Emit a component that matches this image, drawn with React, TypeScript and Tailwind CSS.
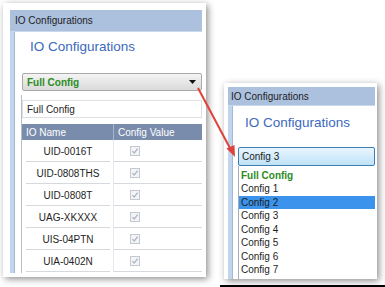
import React from "react";

const font = { fontFamily: '"Liberation Sans", Arial, sans-serif' };

function Check() {
  return (
    <div className="w-[10px] h-[10px] border border-[#c4c8cf] bg-[#f3f4f6] flex items-center justify-center">
      <svg width="8" height="8" viewBox="0 0 8 8">
        <path d="M1.5 4.2 L3.2 6 L6.6 1.6" fill="none" stroke="#a9b1bf" strokeWidth="1.2" />
      </svg>
    </div>
  );
}

const rows = ["UID-0016T", "UID-0808THS", "UID-0808T", "UAG-XKXXX", "UIS-04PTN", "UIA-0402N"];
const items = ["Config 1", "Config 2", "Config 3", "Config 4", "Config 5", "Config 6", "Config 7"];

export default function App() {
  return (
    <div
      className="relative w-[385px] h-[287px] bg-white overflow-hidden flex items-start pl-[3px] pt-[3px] text-[#1e1e1e]"
      style={font}
    >
      {/* Left screenshot */}
      <div className="w-[203px] h-[274px] bg-white shadow-[2px_2px_7px_rgba(0,0,0,0.45)] pt-[7px] pl-[7px] pr-[4px] pb-[4px] flex">
        <div className="flex-1 flex flex-col overflow-hidden">
          <div className="h-[22px] bg-[#abc1de] border-b border-[#c9d8ec] flex items-center pl-[5px] text-[10px]">
            IO Configurations
          </div>
          <div className="flex-1 flex">
            <div className="w-[5px] bg-[#c2d5ee] border-r border-[#a5b9d4]" />
            <div className="flex-1 flex flex-col">
              <div className="pl-[15px] pt-[6px] h-[41px] text-[13.5px] leading-[18px] text-[#3b69bd]">
                IO Configurations
              </div>
              <div className="ml-[7px] h-[18px] rounded-[2px] border border-[#a9a9a9] bg-gradient-to-b from-[#f4f4f4] to-[#dadada] flex items-center justify-between pl-[4px] pr-[5px]">
                <span className="text-[10px] font-bold text-[#2a8c1e]">Full Config</span>
                <svg width="7" height="4" viewBox="0 0 7 4">
                  <path d="M0 0 L7 0 L3.5 4 Z" fill="#111" />
                </svg>
              </div>
              <div className="flex-1 mt-[4px] ml-[6px] border-l border-[#b9bec6] pt-[5px] flex flex-col">
                <div className="h-[18px] border border-[#dcdfe4] flex items-center pl-[4px] text-[10px]">
                  Full Config
                </div>
                <div className="mt-[6px] h-[16px] bg-[#7a8cac] flex text-[10px] text-white">
                  <div className="w-[92px] border-r border-[#a9b6ca] flex items-center pl-[4px]">IO Name</div>
                  <div className="flex-1 flex items-center pl-[4px]">Config Value</div>
                </div>
                {rows.map((r) => (
                  <div key={r} className="h-[22px] flex text-[10px]">
                    <div className="w-[92px] border-r border-[#e6e8eb] pl-[4px] pr-[3px]">
                      <div className="h-full border-b border-[#d6d9dd] flex items-center justify-center pt-[2px]">
                        {r}
                      </div>
                    </div>
                    <div className="flex-1 border-b border-[#d6d9dd] flex items-center pl-[16px]">
                      <Check />
                    </div>
                  </div>
                ))}
              </div>
            </div>
          </div>
        </div>
      </div>

      {/* Right screenshot */}
      <div className="ml-[18px] mt-[80px] w-[153px] h-[196px] bg-white shadow-[2px_2px_7px_rgba(0,0,0,0.45)] pt-[4px] pl-[4px] pr-[2px] flex">
        <div className="flex-1 flex flex-col overflow-hidden">
          <div className="h-[19px] bg-[#abc1de] border-b border-[#c9d8ec] flex items-center pl-[3px] text-[10px]">
            IO Configurations
          </div>
          <div className="flex-1 flex">
            <div className="w-[5px] bg-[#c2d5ee] border-r border-[#a5b9d4]" />
            <div className="flex-1 flex flex-col">
              <div className="pl-[12px] pt-[8px] h-[41px] text-[13.5px] leading-[18px] text-[#3b69bd]">
                IO Configurations
              </div>
              <div className="ml-[5px] h-[19px] rounded-[2px] border border-[#3d7fb3] bg-gradient-to-b from-[#e8f5fd] to-[#bfe2f8] flex items-center pl-[3px] text-[10px]">
                Config 3
              </div>
              <div className="flex-1 ml-[5px] border-l border-[#a7adb5] pt-[2px] flex flex-col text-[10px]">
                <div className="h-[14px] flex items-center pl-[2px] font-bold text-[#2a8c1e]">Full Config</div>
                {items.map((it) => (
                  <div
                    key={it}
                    className={
                      it === "Config 2"
                        ? "h-[13.5px] flex items-center pl-[2px] bg-[#3b93ec]"
                        : "h-[13.5px] flex items-center pl-[2px]"
                    }
                  >
                    {it}
                  </div>
                ))}
              </div>
            </div>
          </div>
        </div>
      </div>

      {/* Bottom black line */}
      <div className="absolute left-[220px] right-0 top-[285px] h-[2px] bg-black" />

      {/* Red arrow */}
      <svg className="absolute left-0 top-0 pointer-events-none" width="385" height="287" viewBox="0 0 385 287">
        <line x1="198" y1="88" x2="231" y2="150" stroke="#e0413a" strokeWidth="2" />
        <path d="M235 157 L226.5 148.5 L234.5 145 Z" fill="#e0413a" />
      </svg>
    </div>
  );
}
